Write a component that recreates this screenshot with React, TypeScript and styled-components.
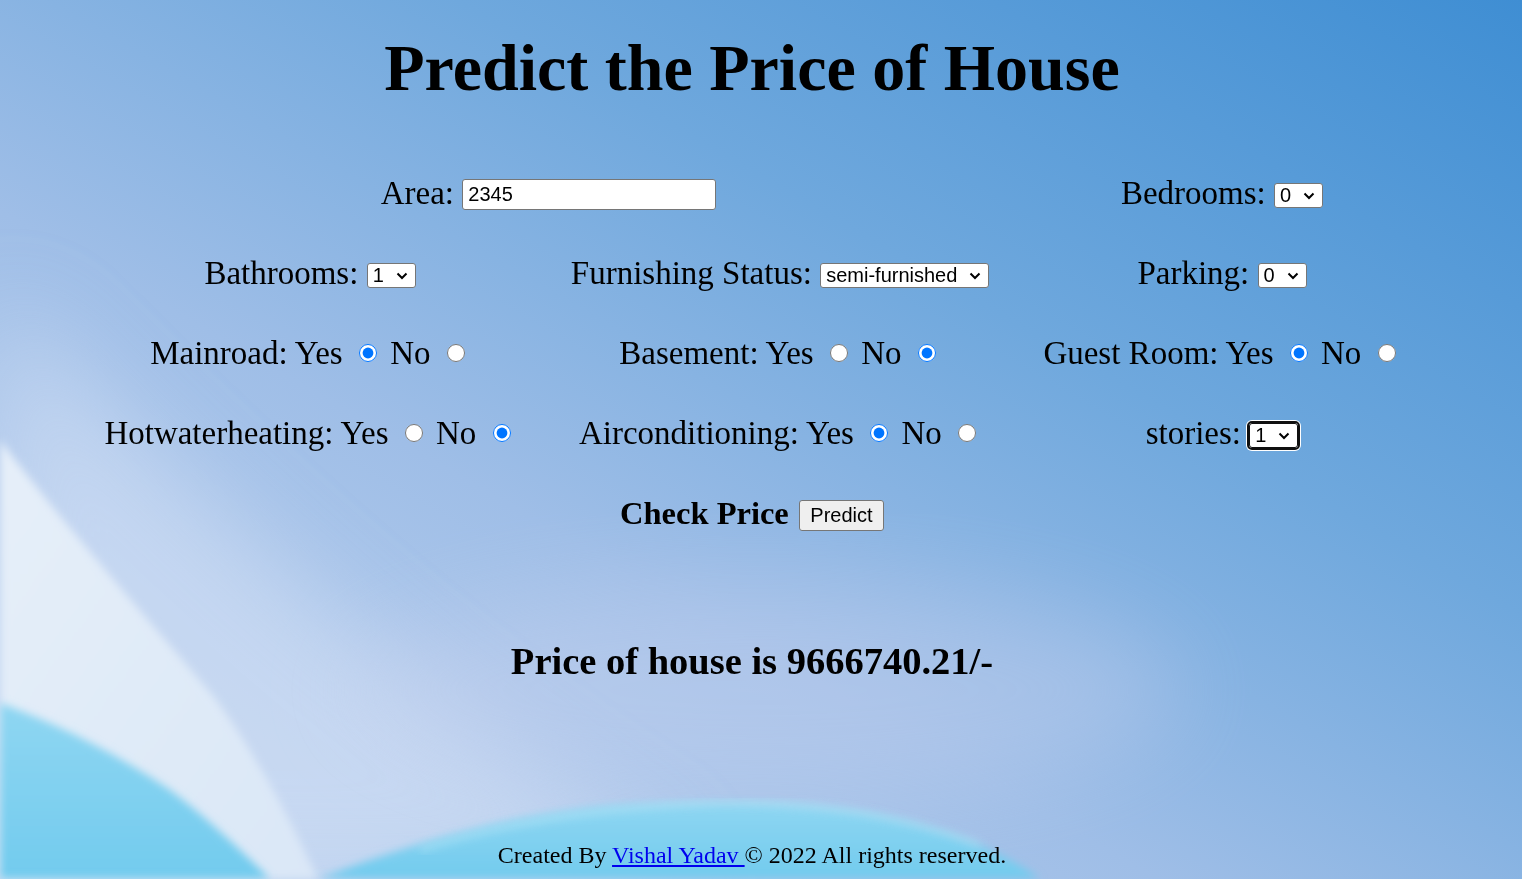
import React from 'react';
import styled, { createGlobalStyle } from 'styled-components';

const GlobalStyle = createGlobalStyle`
  html, body {
    margin: 0;
    padding: 0;
  }
  body {
    font-family: 'Liberation Serif', 'Times New Roman', serif;
    color: #000;
    overflow: hidden;
  }
`;

interface IRadioField {
  label: string;
  name: string;
  value: 'yes' | 'no';
}

const radioFields: IRadioField[] = [
  { label: 'Mainroad', name: 'mainroad', value: 'yes' },
  { label: 'Basement', name: 'basement', value: 'no' },
  { label: 'Guest Room', name: 'guestroom', value: 'yes' },
  { label: 'Hotwaterheating', name: 'hotwaterheating', value: 'no' },
  { label: 'Airconditioning', name: 'airconditioning', value: 'yes' },
];

function Chevron() {
  return (
    <ChevronIcon width="12" height="8" viewBox="0 0 12 8">
      <path d="M1.5 1.5 L6 6 L10.5 1.5" fill="none" stroke="#000" strokeWidth="2" />
    </ChevronIcon>
  );
}

function Select({ options, value, focused }: { options: string[]; value: string; focused?: boolean }) {
  return (
    <SelectWrap>
      <SelectBox defaultValue={value} $focused={focused}>
        {options.map((o) => (
          <option key={o} value={o}>
            {o}
          </option>
        ))}
      </SelectBox>
      <Chevron />
    </SelectWrap>
  );
}

function YesNo({ label, name, value }: IRadioField) {
  return (
    <Cell>
      {label}: Yes <Radio type="radio" name={name} defaultChecked={value === 'yes'} /> No{' '}
      <Radio type="radio" name={name} defaultChecked={value === 'no'} />
    </Cell>
  );
}

// background picture: blue sky gradient with a light swoosh and water waves
function Background() {
  return (
    <BgSvg viewBox="0 0 1522 879" preserveAspectRatio="none">
      <defs>
        <linearGradient id="base" x1="1" y1="0" x2="0" y2="1">
          <stop offset="0" stopColor="#3f8ed3" />
          <stop offset="0.35" stopColor="#6fa8dd" />
          <stop offset="0.62" stopColor="#9fbee7" />
          <stop offset="1" stopColor="#c6d8f1" />
        </linearGradient>
        <linearGradient id="swoosh" x1="0" y1="0" x2="1" y2="1">
          <stop offset="0" stopColor="#e6eff9" />
          <stop offset="1" stopColor="#dae7f7" />
        </linearGradient>
        <linearGradient id="cyan" x1="0" y1="0" x2="0" y2="1">
          <stop offset="0" stopColor="#8fd6f2" />
          <stop offset="1" stopColor="#72cbee" />
        </linearGradient>
        <filter id="soft" x="-10%" y="-10%" width="120%" height="120%">
          <feGaussianBlur stdDeviation="4" />
        </filter>
        <filter id="haze" x="-30%" y="-30%" width="160%" height="160%">
          <feGaussianBlur stdDeviation="45" />
        </filter>
      </defs>
      <rect width="1522" height="879" fill="url(#base)" />
      <path d="M0 300 C 200 500 400 700 700 879 L 0 879 Z" fill="#d3e0f5" opacity="0.6" filter="url(#haze)" />
      <ellipse cx="760" cy="690" rx="420" ry="110" fill="#c9d3ef" opacity="0.35" filter="url(#haze)" />
      <path d="M0 440 C 60 520 140 610 214 697 C 260 760 290 820 318 879 L 0 879 Z" fill="url(#swoosh)" filter="url(#soft)" />
      <path d="M0 703 C 60 725 115 753 170 790 C 210 820 240 850 270 879 L 0 879 Z" fill="url(#cyan)" filter="url(#soft)" />
      <path d="M318 879 C 420 840 520 812 620 805 C 720 800 800 800 880 815 C 950 830 1000 850 1040 879 Z" fill="url(#cyan)" filter="url(#soft)" />
      <path d="M420 850 C 520 818 620 806 720 803 C 820 802 900 815 980 845" fill="none" stroke="#b4e4f6" strokeWidth="5" opacity="0.7" filter="url(#soft)" />
    </BgSvg>
  );
}

export default function App() {
  return (
    <>
      <GlobalStyle />
      <Background />
      <Page>
        <Title>Predict the Price of House</Title>
        <Form onSubmit={(e) => e.preventDefault()}>
          <Grid>
            <Cell $span={2}>
              Area: <TextInput type="text" defaultValue="2345" />
            </Cell>
            <Cell>
              Bedrooms: <Select options={['0', '1', '2', '3', '4', '5', '6']} value="0" />
            </Cell>

            <Cell>
              Bathrooms: <Select options={['1', '2', '3', '4']} value="1" />
            </Cell>
            <Cell>
              Furnishing Status:{' '}
              <Select options={['furnished', 'semi-furnished', 'unfurnished']} value="semi-furnished" />
            </Cell>
            <Cell>
              Parking: <Select options={['0', '1', '2', '3']} value="0" />
            </Cell>

            {radioFields.map((f) => (
              <YesNo key={f.name} {...f} />
            ))}
            <Cell>
              stories: <Select options={['1', '2', '3', '4']} value="1" focused />
            </Cell>
          </Grid>
          <CheckRow>
            Check Price <Button type="submit">Predict</Button>
          </CheckRow>
        </Form>
        <Result>Price of house is 9666740.21/-</Result>
        <Footer>
          Created By <a href="#">Vishal Yadav </a>© 2022 All rights reserved.
        </Footer>
      </Page>
    </>
  );
}

const BgSvg = styled.svg`
  position: fixed;
  inset: 0;
  width: 100vw;
  height: 100vh;
  z-index: 0;
`;

const Page = styled.div`
  position: relative;
  z-index: 1;
  box-sizing: border-box;
  width: calc(100% - 18px);
  min-height: 100vh;
  display: flex;
  flex-direction: column;
  align-items: center;
`;

const Title = styled.h1`
  margin: 30px 0 0;
  font-size: 66px;
  line-height: 76px;
  font-weight: 700;
  text-align: center;
`;

const Form = styled.form`
  display: flex;
  flex-direction: column;
  align-items: center;
  margin-top: 47px;
`;

const Grid = styled.div`
  display: grid;
  grid-template-columns: 463px 477px 407px;
  grid-auto-rows: 80px;
`;

const Cell = styled.div<{ $span?: number }>`
  grid-column: span ${(p) => p.$span ?? 1};
  display: flex;
  align-items: center;
  justify-content: center;
  white-space: pre;
  font-size: 33px;
  line-height: 38px;
`;

const TextInput = styled.input`
  box-sizing: border-box;
  width: 254px;
  height: 31px;
  margin: 3px 0 0;
  padding: 1px 5px;
  border: 1px solid #767676;
  border-radius: 3px;
  background: #fff;
  font-family: 'Liberation Sans', Arial, sans-serif;
  font-size: 20px;
  color: #000;
`;

const SelectWrap = styled.span`
  position: relative;
  display: inline-flex;
  margin-top: 5px;
`;

const SelectBox = styled.select<{ $focused?: boolean }>`
  appearance: none;
  box-sizing: border-box;
  height: 25px;
  margin: 0;
  padding: 0 30px 0 5px;
  border: 1px solid ${(p) => (p.$focused ? '#101010' : '#767676')};
  border-radius: 3px;
  background: #fff;
  font-family: 'Liberation Sans', Arial, sans-serif;
  font-size: 20px;
  line-height: 23px;
  color: #000;
  outline: ${(p) => (p.$focused ? '2px solid #101010' : 'none')};
  box-shadow: ${(p) => (p.$focused ? '0 0 0 3px #fff' : 'none')};
`;

const ChevronIcon = styled.svg`
  position: absolute;
  right: 8px;
  top: 9px;
  pointer-events: none;
`;

const Radio = styled.input`
  width: 18px;
  height: 18px;
  margin: 0 5px 0 8px;
  accent-color: #0075ff;
`;

const CheckRow = styled.div`
  height: 80px;
  display: flex;
  align-items: center;
  justify-content: center;
  white-space: pre;
  font-size: 32.5px;
  font-weight: 700;
`;

const Button = styled.button`
  box-sizing: border-box;
  width: 85px;
  height: 31px;
  margin: 4px 0 0 2px;
  padding: 0;
  border: 1px solid #767676;
  border-radius: 3px;
  background: #efefef;
  font-family: 'Liberation Sans', Arial, sans-serif;
  font-size: 20px;
  font-weight: 400;
  color: #000;
`;

const Result = styled.h2`
  margin: 86px 0 0;
  font-size: 38.5px;
  line-height: 44px;
  font-weight: 700;
  text-align: center;
`;

const Footer = styled.footer`
  margin-top: 158px;
  font-size: 24px;
  line-height: 28px;
  text-align: center;

  a {
    color: #0000ee;
    text-decoration: underline;
  }
`;
